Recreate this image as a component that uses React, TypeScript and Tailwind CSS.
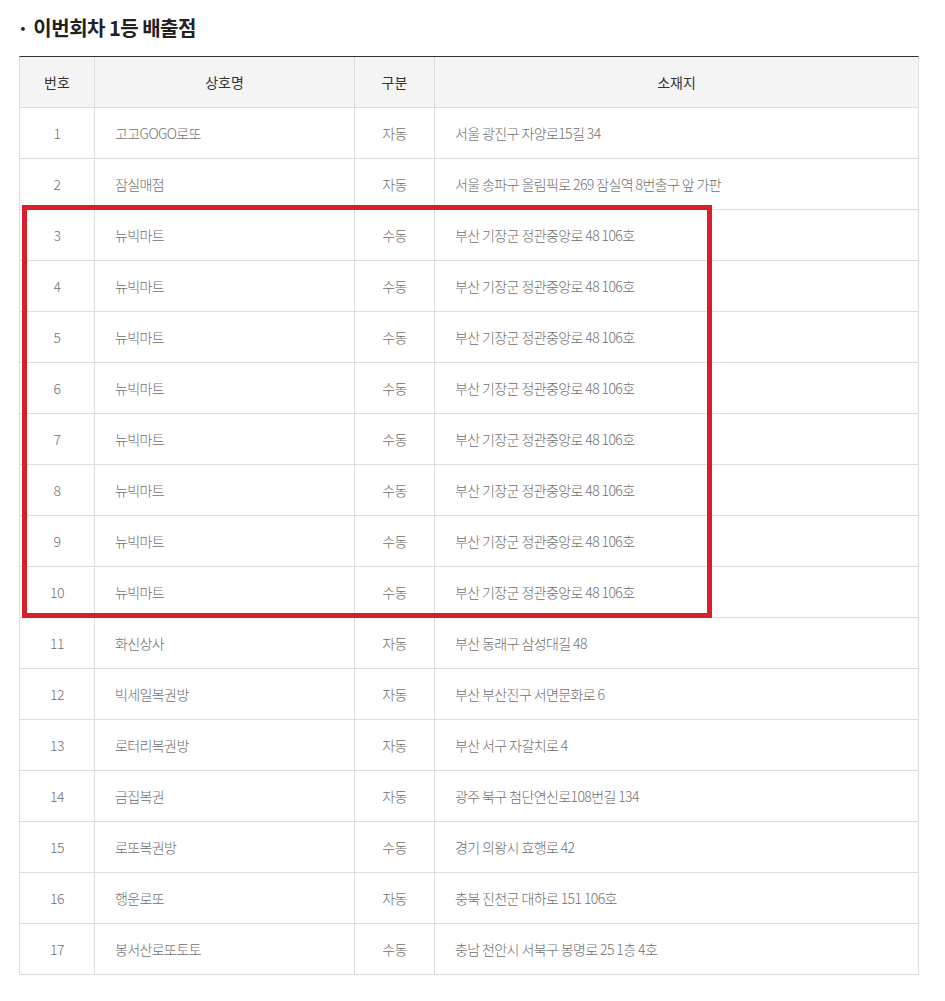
import React from 'react'

const rows = [
  { no: 1, name: '고고GOGO로또', type: '자동', addr: '서울 광진구 자양로15길 34' },
  { no: 2, name: '잠실매점', type: '자동', addr: '서울 송파구 올림픽로 269 잠실역 8번출구 앞 가판' },
  { no: 3, name: '뉴빅마트', type: '수동', addr: '부산 기장군 정관중앙로 48 106호' },
  { no: 4, name: '뉴빅마트', type: '수동', addr: '부산 기장군 정관중앙로 48 106호' },
  { no: 5, name: '뉴빅마트', type: '수동', addr: '부산 기장군 정관중앙로 48 106호' },
  { no: 6, name: '뉴빅마트', type: '수동', addr: '부산 기장군 정관중앙로 48 106호' },
  { no: 7, name: '뉴빅마트', type: '수동', addr: '부산 기장군 정관중앙로 48 106호' },
  { no: 8, name: '뉴빅마트', type: '수동', addr: '부산 기장군 정관중앙로 48 106호' },
  { no: 9, name: '뉴빅마트', type: '수동', addr: '부산 기장군 정관중앙로 48 106호' },
  { no: 10, name: '뉴빅마트', type: '수동', addr: '부산 기장군 정관중앙로 48 106호' },
  { no: 11, name: '화신상사', type: '자동', addr: '부산 동래구 삼성대길 48' },
  { no: 12, name: '빅세일복권방', type: '자동', addr: '부산 부산진구 서면문화로 6' },
  { no: 13, name: '로터리복권방', type: '자동', addr: '부산 서구 자갈치로 4' },
  { no: 14, name: '금집복권', type: '자동', addr: '광주 북구 첨단연신로108번길 134' },
  { no: 15, name: '로또복권방', type: '수동', addr: '경기 의왕시 효행로 42' },
  { no: 16, name: '행운로또', type: '자동', addr: '충북 진천군 대하로 151 106호' },
  { no: 17, name: '봉서산로또토토', type: '수동', addr: '충남 천안시 서북구 봉명로 25 1층 4호' },
]

const grid = 'grid grid-cols-[75px_260px_80px_1fr] h-[51px] border-b border-[#dddddd]'
const cell = 'flex items-center border-r border-[#dddddd]'

export default function App() {
  return (
    <div className="bg-white min-h-screen font-['Noto_Sans_CJK_KR','Noto_Sans',sans-serif]">
      <div className="h-[56px] flex items-center pl-[17px] text-[20px] font-bold text-[#222222] tracking-[-0.5px]">
        <span className="mr-[5px]">·</span>
        <span>이번회차 1등 배출점</span>
      </div>

      <div className="relative ml-[19px] w-[900px] border-t border-t-[#333333] border-x border-x-[#dddddd]">
        <div className={grid + ' bg-[#f4f4f4] text-[14px] text-[#333333]'}>
          <div className={cell + ' justify-center'}>번호</div>
          <div className={cell + ' justify-center'}>상호명</div>
          <div className={cell + ' justify-center'}>구분</div>
          <div className="flex items-center justify-center">소재지</div>
        </div>

        {rows.map((r) => (
          <div key={r.no} className={grid + ' text-[14px] text-[#707070] font-light tracking-[-0.6px]'}>
            <div className={cell + ' justify-center'}>{r.no}</div>
            <div className={cell + ' pl-[20px]'}>{r.name}</div>
            <div className={cell + ' justify-center'}>{r.type}</div>
            <div className="flex items-center pl-[20px]">{r.addr}</div>
          </div>
        ))}

        {/* 강조 표시 박스 */}
        <div className="absolute left-[2px] top-[148px] w-[690px] h-[413px] border-[5px] border-[#d7202b] pointer-events-none" />
      </div>
    </div>
  )
}
